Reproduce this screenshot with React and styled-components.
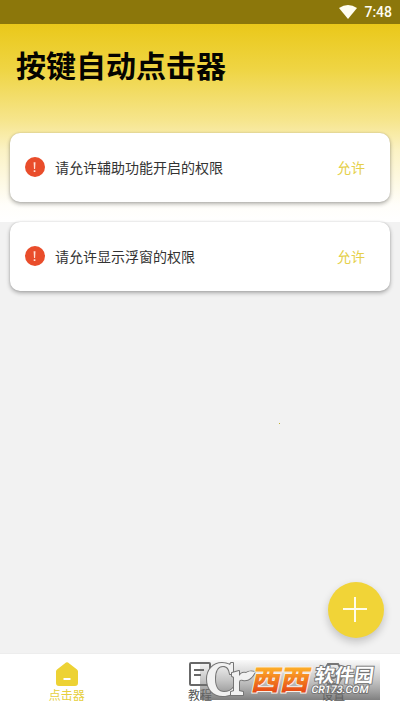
import React from 'react';
import styled, { createGlobalStyle } from 'styled-components';

const GlobalStyle = createGlobalStyle`
	* {
		box-sizing: border-box;
	}

	body {
		margin: 0;
		font-family: 'Noto Sans CJK SC', sans-serif;
	}
`;

const Screen = styled.div`
	position: relative;
	display: flex;
	flex-direction: column;
	width: 400px;
	height: 710px;
	background: linear-gradient(#eac81a 24px, #efd544 70px, #f6e58c 120px, #fbf2c4 150px, #fffefa 205px, #fff 222px, #f2f2f2 222px);
`;

const StatusBar = styled.div`
	display: flex;
	align-items: center;
	justify-content: flex-end;
	gap: 7px;
	height: 24px;
	padding-right: 8px;
	background: #8c770b;
	color: #fffdf0;
	font: 500 14px/24px Roboto, sans-serif;
`;

const Title = styled.h1`
	margin: 18px 0 0 16px;
	color: #050400;
	font-size: 30px;
	font-weight: 700;
	line-height: 44px;
	white-space: nowrap;
`;

const Cards = styled.main`
	display: flex;
	flex: 1;
	flex-direction: column;
	gap: 20px;
	padding: 47px 10px 0;
`;

const Card = styled.section`
	display: flex;
	align-items: center;
	height: 69px;
	padding: 0 25px 2px 15px;
	border-radius: 10px;
	background: #fff;
	box-shadow: 0 2px 4px rgba(0, 0, 0, 0.3), 0 0 2px rgba(0, 0, 0, 0.16);
	font-size: 14px;
	line-height: 20px;
`;

const Alert = styled.svg`
	width: 20px;
	height: 20px;
	margin-right: 10px;
`;

const Label = styled.span`
	flex: 1;
	color: #333;
`;

const Allow = styled.button`
	padding: 0;
	border: 0;
	background: none;
	color: #e5d04a;
	font: inherit;
`;

const AddButton = styled.button`
	position: absolute;
	left: 328px;
	top: 582px;
	width: 56px;
	height: 56px;
	padding: 0;
	border: 0;
	border-radius: 50%;
	background: #f1d437;
	box-shadow: 0 4px 8px rgba(0, 0, 0, 0.2);

	svg {
		display: block;
	}
`;

const TouchDot = styled.i`
	position: absolute;
	left: 279px;
	top: 423px;
	width: 1px;
	height: 1px;
	background: #c0b030;
`;

const TabBar = styled.nav`
	display: grid;
	grid-template-columns: repeat(3, 1fr);
	height: 56px;
	background: #fff;
	box-shadow: 0 0 1px rgba(0, 0, 0, 0.12);
`;

const Tab = styled.div`
	display: flex;
	flex-direction: column;
	align-items: center;
	padding-top: 7px;
	color: ${(props) => (props.$active ? '#e6cf3e' : '#555')};
	font-size: 12px;
	line-height: 18px;

	svg {
		width: 26px;
		height: 26px;
	}

	span {
		margin-top: -1px;
	}
`;

const Watermark = styled.svg`
	position: absolute;
	left: 200px;
	top: 654px;
	overflow: visible;
`;

const permissions = ['请允许辅助功能开启的权限', '请允许显示浮窗的权限'];

const Brand = () => (
	<Watermark width="180" height="54" viewBox="0 -6 180 54">
		<defs>
			<linearGradient id="plate" x1="0" y1="0" x2="0" y2="1">
				<stop offset="0" stopColor="#777" stopOpacity="0.04" />
				<stop offset="0.5" stopColor="#777" stopOpacity="0.42" />
				<stop offset="1" stopColor="#606060" stopOpacity="0.8" />
			</linearGradient>
			<linearGradient id="orange" x1="0" y1="0" x2="0" y2="1">
				<stop offset="0.2" stopColor="#ffb52a" />
				<stop offset="0.85" stopColor="#e64a16" />
			</linearGradient>
		</defs>
		<path d="M0 0H180V40H0Z" fill="url(#plate)" />
		<g fill="#f1f1f1" stroke="#757575" strokeWidth="2" strokeLinejoin="round" paintOrder="stroke">
			<path d="M33 3v11h-3C29 8 27 6 23 6c-6 0-8 6-8 13 0 9 4 13 9 13 4 0 8-2 10-5l3 2c-3 5-8 7-14 7C13 36 7 29 7 19 7 10 13 3 22 3c4 0 6 1 8 2l1-2Z" />
			<path d="M32 13l7-2v5c2-3 4-4 7-3 3-2 5-2 9-1-3 6-7 9-12 8-3-1-4 0-4 3v8l4 1v3H31v-3l3-1V17l-2-1Z" />
		</g>
		<g transform="translate(50 31) skewX(-12) scale(1 0.96)">
			<text x="0" y="-1" fontFamily="Noto Sans CJK SC, sans-serif" fontSize="29" fontWeight="900" fill="url(#orange)" stroke="#f8f0e8" strokeWidth="2" paintOrder="stroke" textLength="58" lengthAdjust="spacingAndGlyphs">西西</text>
		</g>
		<g fill="#fff" stroke="#757575" strokeWidth="1.8" paintOrder="stroke">
			<text transform="translate(114 22) skewX(-8)" fontFamily="Noto Sans CJK SC, sans-serif" fontSize="19" fontWeight="700" textLength="59" lengthAdjust="spacingAndGlyphs">软件园</text>
			<text transform="translate(111 33) skewX(-10)" fontFamily="Roboto, sans-serif" fontSize="10.5" fontWeight="500" textLength="57" lengthAdjust="spacingAndGlyphs">CR173.COM</text>
		</g>
	</Watermark>
);

const App = () => (
	<Screen>
		<GlobalStyle />
		<StatusBar>
			<svg width="18" height="14" viewBox="0 0 18 14">
				<path d="M0 3Q9-3 18 3L9 14Z" fill="currentColor" />
			</svg>
			<span>7:48</span>
		</StatusBar>
		<Title>按键自动点击器</Title>
		<Cards>
			{permissions.map((text) => (
				<Card key={text}>
					<Alert viewBox="0 0 20 20">
						<circle cx="10" cy="10" r="10" fill="#e94d2b" />
						<path d="M8.6 5.2h1.9l-.4 6.8H9ZM8.7 13.2h1.7v1.7H8.7Z" fill="#ffe0d4" />
					</Alert>
					<Label>{text}</Label>
					<Allow>允许</Allow>
				</Card>
			))}
		</Cards>
		<TabBar>
			<Tab $active>
				<svg viewBox="0 0 26 26">
					<path d="M12 1.6q1-.8 2 0l9 7q1 .8 1 2V22q0 3-3 3H5q-3 0-3-3V10.6q0-1.2 1-2Z" fill="#edd234" />
					<path d="M9.5 18h7" stroke="#fff" strokeWidth="2" />
				</svg>
				<span>点击器</span>
			</Tab>
			<Tab>
				<svg viewBox="0 0 26 26" fill="none" stroke="#686868" strokeWidth="2">
					<rect x="3" y="2" width="20" height="22" rx="1" />
					<path d="M7 9h10M7 14h7" />
				</svg>
				<span>教程</span>
			</Tab>
			<Tab>
				<svg viewBox="0 0 26 26" fill="none" stroke="#777" strokeWidth="2">
					<path d="M8 3h10l6 10-6 10H8L2 13Z" />
					<circle cx="13" cy="13" r="4" />
				</svg>
				<span>设置</span>
			</Tab>
		</TabBar>
		<TouchDot />
		<AddButton aria-label="add">
			<svg width="56" height="56" viewBox="0 0 56 56">
				<path d="M27 15v25M15 27h24" stroke="#fffde9" strokeWidth="2" />
			</svg>
		</AddButton>
		<Brand />
	</Screen>
);

export default App;
